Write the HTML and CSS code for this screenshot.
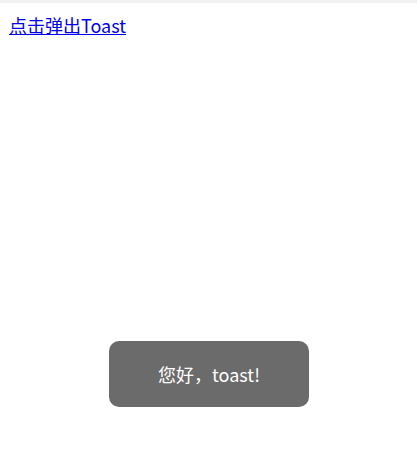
FILE: index.html
```html
<!DOCTYPE html>
<html lang="zh">
<head>
<meta charset="utf-8">
<link rel="stylesheet" href="styles.css">
</head>
<body>
<div class="topbar"></div>
<main class="page">
  <a class="trigger" href="#">点击弹出Toast</a>
</main>
<div class="toast">您好，toast!</div>
</body>
</html>
```
FILE: styles.css
```css
html, body {
  margin: 0;
  padding: 0;
  background: #fff;
}
body {
  font-family: "Noto Sans CJK SC", "Microsoft YaHei", sans-serif;
}
.topbar {
  height: 3px;
  background: #f0f0f0;
}
.page {
  padding: 9px 9px;
}
.trigger {
  font-size: 18px;
  line-height: 26px;
  color: #0000ee;
  text-decoration: underline;
}
.toast {
  position: fixed;
  left: 109px;
  top: 341px;
  width: 200px;
  height: 66px;
  border-radius: 10px;
  background: #6b6b6b;
  color: #fff;
  font-size: 18px;
  display: flex;
  align-items: center;
  justify-content: center;
}
```
